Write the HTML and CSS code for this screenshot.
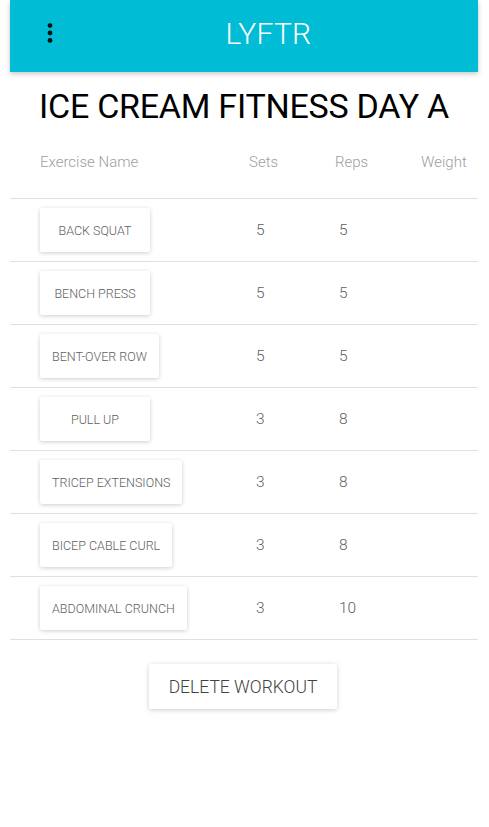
FILE: index.html
```html
<!DOCTYPE html>
<html>
<head>
<meta charset="utf-8">
<link rel="stylesheet" href="styles.css">
</head>
<body>
<div class="app">
  <header class="appbar">
    <button class="menu" aria-label="menu">
      <svg width="6" height="20" viewBox="0 0 6 20"><circle cx="3" cy="2.6" r="2.4"/><circle cx="3" cy="10" r="2.4"/><circle cx="3" cy="17.4" r="2.4"/></svg>
    </button>
    <div class="brand">LYFTR</div>
  </header>
  <h1 class="title">ICE CREAM FITNESS DAY A</h1>
  <div class="table">
    <div class="row head">
      <div class="c-name">Exercise Name</div>
      <div class="c-sets">Sets</div>
      <div class="c-reps">Reps</div>
      <div class="c-weight">Weight</div>
    </div>
    <div class="row">
      <div class="c-name"><button class="ex">BACK SQUAT</button></div>
      <div class="c-sets num">5</div>
      <div class="c-reps num">5</div>
      <div class="c-weight"></div>
    </div>
    <div class="row">
      <div class="c-name"><button class="ex">BENCH PRESS</button></div>
      <div class="c-sets num">5</div>
      <div class="c-reps num">5</div>
      <div class="c-weight"></div>
    </div>
    <div class="row">
      <div class="c-name"><button class="ex">BENT-OVER ROW</button></div>
      <div class="c-sets num">5</div>
      <div class="c-reps num">5</div>
      <div class="c-weight"></div>
    </div>
    <div class="row">
      <div class="c-name"><button class="ex">PULL UP</button></div>
      <div class="c-sets num">3</div>
      <div class="c-reps num">8</div>
      <div class="c-weight"></div>
    </div>
    <div class="row">
      <div class="c-name"><button class="ex">TRICEP EXTENSIONS</button></div>
      <div class="c-sets num">3</div>
      <div class="c-reps num">8</div>
      <div class="c-weight"></div>
    </div>
    <div class="row">
      <div class="c-name"><button class="ex">BICEP CABLE CURL</button></div>
      <div class="c-sets num">3</div>
      <div class="c-reps num">8</div>
      <div class="c-weight"></div>
    </div>
    <div class="row">
      <div class="c-name"><button class="ex">ABDOMINAL CRUNCH</button></div>
      <div class="c-sets num">3</div>
      <div class="c-reps num">10</div>
      <div class="c-weight"></div>
    </div>
  </div>
  <div class="actions">
    <button class="delete">DELETE WORKOUT</button>
  </div>
</div>
</body>
</html>
```
FILE: styles.css
```css
html, body {
  margin: 0;
  padding: 0;
  background: #fff;
}
body {
  font-family: Roboto, "Liberation Sans", sans-serif;
}
.app {
  width: 468px;
  margin-left: 10px;
}
.appbar {
  height: 72px;
  background: #00bcd4;
  box-shadow: 0 2px 5px rgba(0,0,0,0.22);
  display: flex;
  align-items: center;
  position: relative;
}
.menu {
  border: 0;
  background: transparent;
  padding: 0;
  margin-left: 37px;
  width: 6px;
  height: 20px;
  display: flex;
  margin-top: -6px;
}
.menu svg {
  fill: #111;
}
.brand {
  flex: 1;
  text-align: center;
  color: #fff;
  font-size: 30px;
  font-weight: 300;
  margin-top: -6px;
  padding-left: 6px;
  letter-spacing: 0.3px;
}
.title {
  margin: 14px 0 0 0;
  text-align: center;
  font-size: 34px;
  font-weight: 400;
  color: #000;
  line-height: 40px;
  letter-spacing: -0.25px;
}
.table {
  margin-top: 27px;
}
.row {
  display: grid;
  grid-template-columns: 209px 86px 86px 1fr;
  padding-left: 30px;
  height: 62px;
  align-items: center;
  border-bottom: 1px solid #e0e0e0;
}
.row.head {
  height: 45px;
  align-items: start;
  font-size: 15px;
  font-weight: 300;
  color: #9e9e9e;
}
.num {
  font-size: 15.5px;
  font-weight: 300;
  color: #616161;
  padding-left: 7px;
}
.c-reps.num {
  padding-left: 4px;
}
.ex {
  font-family: Roboto, "Liberation Sans", sans-serif;
  font-size: 12.5px;
  font-weight: 300;
  color: #616161;
  background: #fff;
  border: 0;
  border-radius: 2px;
  height: 44px;
  min-width: 110px;
  padding: 0 12px;
  text-align: center;
  box-shadow: 0 1px 4px rgba(0,0,0,0.2);
  display: block;
}
.actions {
  display: flex;
  justify-content: center;
  padding-top: 24px;
  padding-bottom: 10px;
}
.delete {
  font-family: Roboto, "Liberation Sans", sans-serif;
  font-size: 17.5px;
  font-weight: 300;
  color: #424242;
  background: #fff;
  border: 0;
  border-radius: 2px;
  height: 45px;
  padding: 0 20px;
  box-shadow: 0 1px 5px rgba(0,0,0,0.2);
  margin-left: -2px;
}
```
